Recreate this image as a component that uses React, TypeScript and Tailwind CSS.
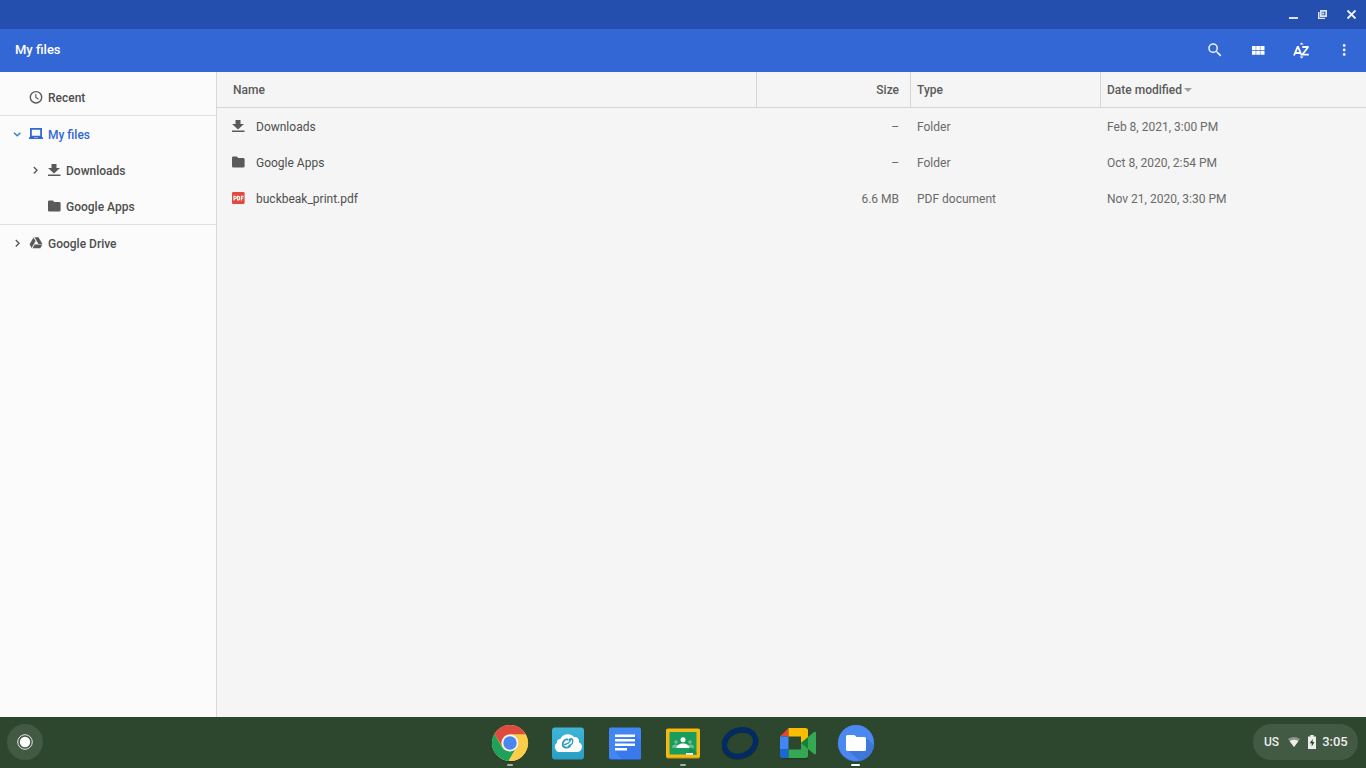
import type { ReactNode } from "react";

type IconProps = { className?: string };

function DownloadIcon({ className = "" }: IconProps) {
  return (
    <svg viewBox="0 0 14 14" className={`size-[14px] shrink-0 fill-[#5a5a5a] ${className}`} aria-hidden="true">
      <path d="M4.500 1h5v4H13L7 10.500 1 5h3.500zM1 11.500h12.500V13H1z" />
    </svg>
  );
}

function FolderIcon({ className = "" }: IconProps) {
  return (
    <svg viewBox="0 0 14 14" className={`size-[14px] shrink-0 fill-[#5a5a5a] ${className}`} aria-hidden="true">
      <path d="M2.300 1.500h3.500L7.300 3h5a1.300 1.300 0 0 1 1.300 1.300v6.900a1.300 1.300 0 0 1-1.300 1.300h-10A1.300 1.300 0 0 1 1 11.200V2.800A1.300 1.300 0 0 1 2.300 1.500z" />
    </svg>
  );
}

function PdfIcon() {
  return (
    <svg viewBox="0 0 14 14" className="size-[14px] shrink-0" aria-hidden="true">
      <rect x="1" y="1" width="12.600" height="12" rx="1.200" fill="#e04a3f" />
      <g fill="none" stroke="#fff" strokeWidth="1.100">
        <path d="M3 9.500V5.300h1.100a1.200 1.200 0 0 1 0 2.400H3" />
        <path d="M6.600 5.300h.7a1.300 1.300 0 0 1 1.300 1.300v1.100A1.300 1.300 0 0 1 7.300 9h-.7z" />
        <path d="M10.400 9.500V5.300h2.300M10.400 7.300h1.900" />
      </g>
    </svg>
  );
}

function ClockIcon() {
  return (
    <svg viewBox="0 0 14 14" className="size-[14px] shrink-0 fill-none stroke-[#5a5a5a]" aria-hidden="true">
      <circle cx="7" cy="7.300" r="5.700" strokeWidth="1.400" />
      <path d="M6.800 4v3.500l2.700 1.700" strokeWidth="1.100" />
    </svg>
  );
}

function LaptopIcon() {
  return (
    <svg viewBox="0 0 14 14" className="size-[14px] shrink-0" aria-hidden="true">
      <path fill="#3367d6" fillRule="evenodd" d="M1 1h12v9.300h1V12H0v-1.700h1zM2.800 2.700v6h8.400v-6z" />
      <path fill="#a9c0f0" d="M5 10.300h4v.8H5z" />
    </svg>
  );
}

function DriveIcon() {
  return (
    <svg viewBox="0 0 24 24" className="size-[14px] shrink-0 fill-[#5a5a5a]" aria-hidden="true">
      <path d="M7.700 2.500 1 14.200l3.400 6.300L11.300 8.500zM9.600 14.700l-3.500 6.300h13.300l3.600-6.300zM23 13.500 16.300 2H9.400l6.800 11.500z" />
    </svg>
  );
}

function Chevron({ open }: { open?: boolean }) {
  return (
    <svg viewBox="0 0 10 10" className="size-[10px] shrink-0 fill-none" aria-hidden="true">
      {open ? (
        <path d="M2 3.700 5.200 6.700 8.400 3.700" stroke="#3583c6" strokeWidth="1.500" />
      ) : (
        <path d="M3.800 2 7 5.200 3.800 8.400" stroke="#5a5a5a" strokeWidth="1.400" />
      )}
    </svg>
  );
}

function TreeItem({
  label,
  icon,
  indent,
  state,
  active,
}: {
  label: string;
  icon: ReactNode;
  indent?: boolean;
  state?: "open" | "closed";
  active?: boolean;
}) {
  return (
    <button
      type="button"
      aria-expanded={state ? state === "open" : undefined}
      className={`flex h-9 w-full items-center text-left ${indent ? "pl-[30px]" : "pl-3"} ${active ? "text-[#3367d6]" : "text-[#4e4e4e]"}`}
    >
      <span className="mr-[7px] flex w-[10px]">{state && <Chevron open={state === "open"} />}</span>
      {icon}
      <span className="ml-[5px] pt-px">{label}</span>
    </button>
  );
}

const files = [
  { name: "Downloads", icon: <DownloadIcon />, size: "–", type: "Folder", date: "Feb 8, 2021, 3:00 PM" },
  { name: "Google Apps", icon: <FolderIcon />, size: "–", type: "Folder", date: "Oct 8, 2020, 2:54 PM" },
  { name: "buckbeak_print.pdf", icon: <PdfIcon />, size: "6.6 MB", type: "PDF document", date: "Nov 21, 2020, 3:30 PM" },
];

function FileTable() {
  return (
    <table className="w-full table-fixed border-separate border-spacing-0 text-left leading-4">
      <colgroup>
        <col className="w-[47%]" />
        <col className="w-[154px]" />
        <col className="w-[190px]" />
        <col />
      </colgroup>
      <thead className="text-[#5a5a5a]">
        <tr className="h-9">
          <th className="border-r border-b border-[#d5d5d5] p-0 pl-4 font-medium">Name</th>
          <th className="border-r border-b border-[#d5d5d5] p-0 pr-[11px] text-right font-medium">Size</th>
          <th className="border-r border-b border-[#d5d5d5] p-0 pl-[6px] font-medium">Type</th>
          <th className="border-b border-[#d5d5d5] p-0 pl-[6px] font-medium" aria-sort="descending">
            <button type="button" className="flex items-center gap-[2px]">
              Date modified
              <svg viewBox="0 0 8 5" className="h-[5px] w-2 fill-[#a0a0a0]" aria-hidden="true">
                <path d="M0 1h8L4 5z" />
              </svg>
            </button>
          </th>
        </tr>
      </thead>
      <tbody className="text-[#6a6a6a]">
        {files.map((file) => (
          <tr key={file.name} className="h-9">
            <td className="p-0 pl-[14px]">
              <div className="flex items-center gap-[11px] text-[#4e4e4e]">
                {file.icon}
                <span className="pt-px">{file.name}</span>
              </div>
            </td>
            <td className="p-0 pt-px pr-3 text-right">{file.size}</td>
            <td className="p-0 pt-px pl-[6px]">{file.type}</td>
            <td className="p-0 pt-px pl-[6px]">{file.date}</td>
          </tr>
        ))}
      </tbody>
    </table>
  );
}

function ChromeLogo() {
  return (
    <svg viewBox="0 0 38 38" className="size-[38px]" aria-hidden="true">
      <circle cx="19" cy="20" r="18" fill="#000" opacity=".2" />
      <circle cx="19" cy="19" r="18" fill="#fbcd4b" />
      <path fill="#dc4b3e" d="M3.400 10A18 18 0 0 1 34.800 10.500H19a8.500 8.500 0 0 0-7.500 12.500z" />
      <path fill="#1ea15d" d="M3.400 10A18 18 0 0 0 17.500 37l8.200-13.500A9 9 0 0 1 11.500 24z" />
      <path fill="#fbcd4b" d="M19 10.500h15.800A18 18 0 0 1 17.500 37l8-14z" />
      <circle cx="19" cy="19" r="8.400" fill="#f4f4f4" />
      <circle cx="19" cy="19" r="6.700" fill="#4a86ec" />
    </svg>
  );
}

function CloudLogo() {
  return (
    <svg viewBox="0 0 38 38" className="size-[38px]" aria-hidden="true">
      <defs>
        <linearGradient id="sky" x2="0" y2="1">
          <stop stopColor="#3fb6d8" />
          <stop offset="1" stopColor="#279fc4" />
        </linearGradient>
      </defs>
      <rect x="3" y="3.500" width="32" height="32" rx="3" fill="url(#sky)" />
      <path fill="#fff" d="M12 28a5.200 5.200 0 0 1-4-9.300c-.3-2.200 1-3.700 3.300-3.700 2-5.500 10.500-6.500 13.700-2 3.700 0 5.500 2 5 5.300A5.100 5.100 0 0 1 28 28z" />
      <g fill="none" stroke="#2b9abb" strokeLinecap="round">
        <path strokeWidth="1.800" d="M18.500 15.500c-2.500-.5-4.800 2-4.800 4.800 0 3.700 4.300 4.200 7.300 1.900" />
        <path strokeWidth="1.300" d="M15.500 20.500c3-.3 5.500-2.200 7-6M20 16c1.500-1.800 3.800-1.700 3.800.5 0 2.500-1.800 4.600-3.800 5" />
      </g>
    </svg>
  );
}

function DocsLogo() {
  return (
    <svg viewBox="0 0 38 38" className="size-[38px]" aria-hidden="true">
      <rect x="3" y="4" width="32" height="32" rx="2" fill="#275bb7" />
      <rect x="3" y="3.500" width="32" height="31.500" rx="2" fill="#4285f4" />
      <path fill="#3979eb" d="m29 11 6 6v18H16l-7-8z" />
      <path fill="#fff" d="M9 10.500h20V13H9zM9 15h20v2.500H9zM9 19.500h20V22H9zM9 24h12v2.500H9z" />
    </svg>
  );
}

function ClassroomLogo() {
  return (
    <svg viewBox="0 0 38 38" className="size-[38px]" aria-hidden="true">
      <rect x="2" y="5" width="34" height="29.500" rx="2" fill="#cf970a" />
      <rect x="2" y="4.500" width="34" height="29" rx="2" fill="#f5b914" />
      <path fill="#199d5a" d="M5.500 8h27v22.500h-27z" />
      <path fill="#168c50" d="m26 23.500 6.500 5v2H24z" />
      <g fill="#6ac19a">
        <circle cx="12" cy="18" r="1.800" />
        <circle cx="26" cy="18" r="1.800" />
        <path d="M8 23.700c0-3 3-4 6-2.500v2.500zM30 23.700c0-3-3-4-6-2.500v2.500z" />
      </g>
      <circle cx="19" cy="15.800" r="2.500" fill="#fff" />
      <path fill="#fff" d="M12.500 24c0-6 13-6 13 0zM22 29h7v1.800h-7z" />
    </svg>
  );
}

function RingLogo() {
  return (
    <svg viewBox="0 0 38 38" className="size-[38px]" aria-hidden="true">
      <ellipse cx="18" cy="20" rx="16.500" ry="13" transform="rotate(-22 18 20)" fill="none" stroke="#203820" strokeWidth="5" />
      <ellipse cx="18" cy="19" rx="16" ry="12.800" transform="rotate(-22 18 19)" fill="none" stroke="#032b61" strokeWidth="5.500" />
    </svg>
  );
}

function MeetLogo() {
  return (
    <svg viewBox="0 0 38 38" className="size-[38px]" aria-hidden="true">
      <path fill="#223a24" d="M2 31h27v4.500H4z" />
      <path fill="#e84435" d="M9.500 4v8.500H1z" />
      <path fill="#4285f4" d="M1 12.500h8.500v13H1z" />
      <path fill="#1967d2" d="M1 25.500h8.500V34H3.500A2.500 2.500 0 0 1 1 31.500z" />
      <path fill="#fbbc04" d="M9.500 4h17A2.500 2.500 0 0 1 29 6.500V19h-7v-6.500H9.500z" />
      <path fill="#34a853" d="M9.500 25.500H22V19h7v12.500a2.500 2.500 0 0 1-2.500 2.500h-17z" />
      <path fill="#34a853" d="m22 19 13-11q2-1 2 1v20q0 2-2 1z" />
      <path fill="#188038" d="m22 19 7-5.800v11.600z" />
    </svg>
  );
}

function FilesLogo() {
  return (
    <svg viewBox="0 0 38 38" className="size-[38px]" aria-hidden="true">
      <circle cx="19" cy="19.500" r="18.300" fill="#315e9d" />
      <circle cx="19" cy="19" r="18" fill="#4b88f0" />
      <path fill="#3f77d9" d="m29 14 8 7a18 18 0 0 1-14 15.500L10 26z" />
      <path fill="#fff" d="M10.500 11h7l2 2h8A1.500 1.500 0 0 1 29 14.500v11a1.500 1.500 0 0 1-1.500 1.500h-17A1.500 1.500 0 0 1 9 25.500v-13a1.500 1.500 0 0 1 1.500-1.500z" />
    </svg>
  );
}

const apps = [
  { name: "Chrome", logo: <ChromeLogo />, mark: "bg-[#a4b2a6] w-[6px]" },
  { name: "Cloud", logo: <CloudLogo /> },
  { name: "Docs", logo: <DocsLogo /> },
  { name: "Classroom", logo: <ClassroomLogo />, mark: "bg-[#a4b2a6] w-[6px]" },
  { name: "Ring", logo: <RingLogo /> },
  { name: "Meet", logo: <MeetLogo /> },
  { name: "Files", logo: <FilesLogo />, mark: "bg-white w-[9px]" },
];

function Shelf() {
  return (
    <footer className="grid h-[51px] shrink-0 grid-cols-[1fr_auto_1fr] items-start bg-[#2d472e] px-[7px] pt-[7px]">
      <button type="button" aria-label="Launcher" className="flex size-9 items-center justify-center rounded-full bg-[#425943]">
        <svg viewBox="0 0 18 18" className="size-[18px]" aria-hidden="true">
          <circle cx="9" cy="9" r="7.300" fill="none" stroke="#e3e8e3" strokeWidth="1" />
          <circle cx="9" cy="9" r="5.200" fill="#fff" />
        </svg>
      </button>
      <nav aria-label="Apps" className="flex w-[384px] justify-between">
        {apps.map((app) => (
          <button key={app.name} type="button" aria-label={app.name} className="flex w-[38px] flex-col items-center">
            {app.logo}
            {app.mark && <span className={`mt-[2px] h-[2px] rounded-full ${app.mark}`} />}
          </button>
        ))}
      </nav>
      <button
        type="button"
        className="mr-px flex h-9 w-[105px] items-center justify-self-end rounded-full bg-[#425943] pl-[11px] text-xs font-medium text-[#eceeec]"
      >
        <span>US</span>
        <svg viewBox="0 0 12 10" className="ml-[9px] h-[10px] w-3" aria-hidden="true">
          <path fill="#8a988b" d="M0 2Q6-2 12 2L6 10z" />
          <path fill="#eceeec" d="M1.700 4.200Q6 1.400 10.300 4.200L6 10z" />
        </svg>
        <svg viewBox="0 0 8 14" className="ml-2 h-[14px] w-2" aria-hidden="true">
          <path fill="#eceeec" d="M2.300 0h3.400v1.500H8V14H0V1.500h2.300z" />
          <path fill="#2d472e" d="M4.800 4 1.700 8.300h2V11.500L6.500 7H4.600z" />
        </svg>
        <span className="ml-[6px] text-[13px]">3:05</span>
      </button>
    </footer>
  );
}

export default function App() {
  return (
    <div className="flex h-screen flex-col overflow-hidden bg-[#f5f5f5] font-[Roboto,sans-serif] text-xs">
      <div className="flex h-[29px] shrink-0 items-center justify-end gap-[15px] bg-[#254fae] pr-2">
        <button type="button" aria-label="Minimize">
          <svg viewBox="0 0 14 14" className="size-[14px]" aria-hidden="true">
            <path fill="#dce3f2" d="M3 9h9v2H3z" />
          </svg>
        </button>
        <button type="button" aria-label="Restore">
          <svg viewBox="0 0 14 14" className="size-[14px]" aria-hidden="true">
            <path fill="#dce3f2" fillRule="evenodd" d="M5 2h7v7H5zM6.700 3.700v3.600h3.600V3.700z" />
            <path fill="#dce3f2" d="M3 4h1.500v5.700H10V11H3zM7.200 4.500h2v2h-2z" />
          </svg>
        </button>
        <button type="button" aria-label="Close">
          <svg viewBox="0 0 14 14" className="size-[14px] fill-none stroke-[#edf1f9]" aria-hidden="true">
            <path strokeWidth="1.800" d="m3.500 2.500 8 8m0-8-8 8" />
          </svg>
        </button>
      </div>
      <header className="flex h-[43px] shrink-0 items-center justify-between bg-[#3367d6] pr-[13px] pb-px pl-[15px] text-white">
        <h1 className="text-[13px] font-medium">My files</h1>
        <div className="flex gap-[25px]">
          <button type="button" aria-label="Search">
            <svg viewBox="0 0 24 24" className="size-[18px] fill-[#edf2fc]" aria-hidden="true">
              <path d="M15.500 14h-.8l-.3-.3A6.500 6.500 0 1 0 13.700 14.400l.3.300v.8l5 5 1.500-1.500zm-6 0a4.500 4.500 0 1 1 0-9 4.500 4.500 0 0 1 0 9z" />
            </svg>
          </button>
          <button type="button" aria-label="Thumbnail view">
            <svg viewBox="0 0 18 18" className="size-[18px] fill-white" aria-hidden="true">
              <path d="M3 5h3.700v4H3zM7.200 5h3.700v4H7.200zM11.400 5H15.500v4h-4.100zM3 9.700h3.700v4H3zM7.200 9.700h3.700v4H7.200zM11.400 9.700H15.500v4h-4.100z" />
            </svg>
          </button>
          <button type="button" aria-label="Sort options">
            <svg viewBox="0 0 18 18" className="size-[18px] fill-none stroke-white" aria-hidden="true">
              <path strokeWidth="1.800" d="M2 14.500 5.600 6h.5l3.600 8.500M3.300 12h5.200M10.300 6h5.500v.5l-5.200 6.700v.5h6.200" />
              <path fill="#fff" stroke="none" d="M7.600 3.600 9.600 1.600l2 2zM7.600 15.600l2 2 2-2z" />
            </svg>
          </button>
          <button type="button" aria-label="More options">
            <svg viewBox="0 0 18 18" className="size-[18px] fill-[#edf2fc]" aria-hidden="true">
              <circle cx="9.200" cy="4.500" r="1.400" />
              <circle cx="9.200" cy="9" r="1.400" />
              <circle cx="9.200" cy="13.500" r="1.400" />
            </svg>
          </button>
        </div>
      </header>
      <div className="flex min-h-0 flex-1">
        <nav aria-label="Locations" className="w-[217px] shrink-0 border-r border-[#d9d9d9] bg-[#fbfbfb] pt-[7px] font-medium">
          <TreeItem label="Recent" icon={<ClockIcon />} />
          <div className="border-y border-[#e0e0e0]">
            <TreeItem label="My files" icon={<LaptopIcon />} state="open" active />
            <TreeItem label="Downloads" icon={<DownloadIcon />} state="closed" indent />
            <TreeItem label="Google Apps" icon={<FolderIcon />} indent />
          </div>
          <TreeItem label="Google Drive" icon={<DriveIcon />} state="closed" />
        </nav>
        <main className="min-w-0 flex-1">
          <FileTable />
        </main>
      </div>
      <Shelf />
    </div>
  );
}
